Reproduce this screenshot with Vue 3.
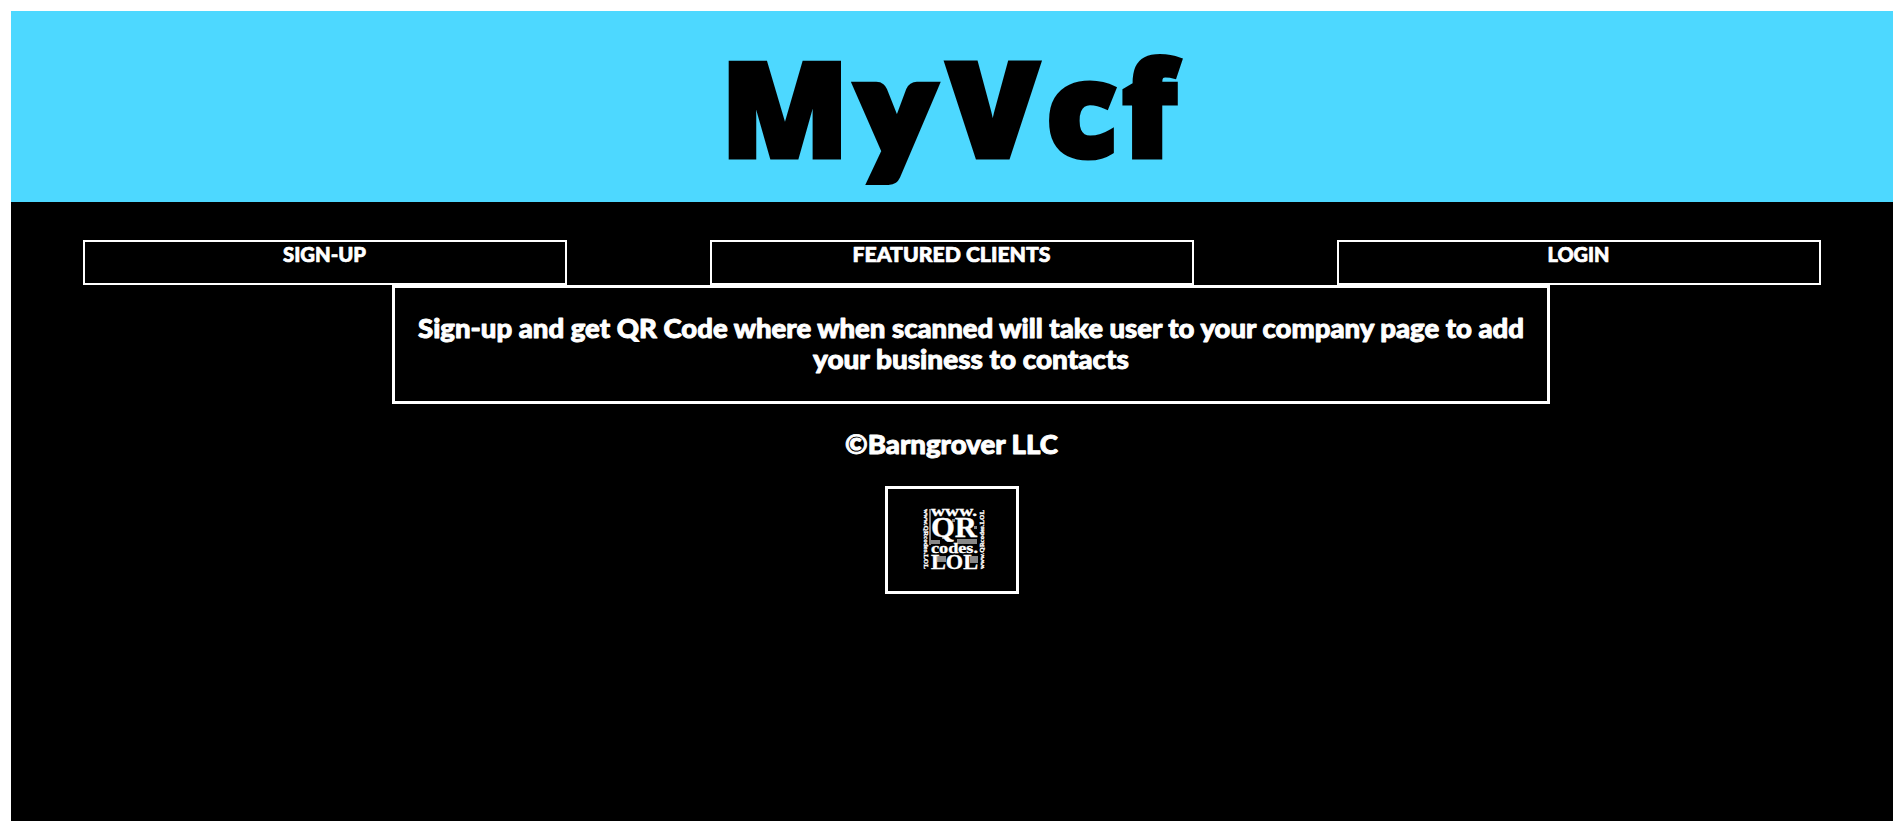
<script setup>
const links = [
  { label: 'SIGN-UP', length: 83 },
  { label: 'FEATURED CLIENTS', length: 198 },
  { label: 'LOGIN', length: 62 },
]
</script>

<template>
  <div class="page">
    <header class="banner">
      <svg class="title" viewBox="0 0 454 148" role="img">
        <text x="-7 132 219 318 394" y="112">M<tspan class="tail">y</tspan>Vcf</text>
      </svg>
    </header>
    <nav class="links">
      <a v-for="l in links" :key="l.label" class="link">
        <svg class="link-text" width="220" height="36">
          <text :x="109.5 - l.length / 2" y="20" :textLength="l.length" lengthAdjust="spacingAndGlyphs">{{ l.label }}</text>
        </svg>
      </a>
    </nav>
    <section class="info">
      <svg class="copy" width="1110" height="70">
        <text x="2" y="26" textLength="1106" lengthAdjust="spacingAndGlyphs">Sign-up and get QR Code where when scanned will take user to your company page to add</text>
        <text x="397" y="57" textLength="316" lengthAdjust="spacingAndGlyphs">your business to contacts</text>
      </svg>
    </section>
    <svg class="copy owner" width="214" height="36">
      <text x="0" y="25" textLength="213" lengthAdjust="spacingAndGlyphs">©Barngrover LLC</text>
    </svg>
    <div class="badge">
      <svg class="logo" viewBox="0 0 62 62">
        <g fill="#888">
          <rect x="6" y="1" width="2" height="36" /><rect x="8" y="32" width="9" height="4" />
          <rect x="34" y="31" width="20" height="5" /><rect x="14" y="48" width="9" height="6" />
          <rect x="47" y="48" width="8" height="7" /><rect x="29" y="11" width="3" height="3" />
          <rect x="51" y="18" width="3" height="3" /><rect x="19" y="29" width="2" height="2" />
        </g>
        <g class="serif">
          <text x="8" y="8" font-size="15" textLength="46" lengthAdjust="spacingAndGlyphs">www.</text>
          <text x="8" y="29" font-size="30" textLength="46" lengthAdjust="spacingAndGlyphs">QR</text>
          <text x="8" y="45" font-size="15" textLength="47" lengthAdjust="spacingAndGlyphs">codes.</text>
          <text x="8" y="61" font-size="22" textLength="47" lengthAdjust="spacingAndGlyphs">LOL</text>
          <text transform="translate(0.5 1) rotate(90)" font-size="7" textLength="60" lengthAdjust="spacingAndGlyphs">www.QRcodes.LOL</text>
          <text transform="translate(61 61) rotate(-90)" font-size="7" textLength="59" lengthAdjust="spacingAndGlyphs">www.QRcodes.LOL</text>
        </g>
      </svg>
    </div>
  </div>
</template>

<style>
body { background: #fff; }
</style>

<style scoped>
.page {
  box-sizing: border-box;
  width: 1882px;
  height: 810px;
  margin: 11px 0 0 11px;
  background: #000;
  display: flex;
  flex-direction: column;
  align-items: center;
}
.banner {
  width: 100%;
  height: 191px;
  background: #4dd8ff;
  display: flex;
  justify-content: center;
}
.title {
  width: 454px;
  height: 148px;
  margin-top: 34px;
  margin-left: 6px;
  overflow: visible;
  font: 800 132px "Open Sans", sans-serif;
  stroke: #000;
  stroke-width: 5px;
  stroke-linejoin: miter;
}
.tail {
  font: 900 134px Lato, sans-serif;
  stroke-width: 12px;
}
.links {
  width: 100%;
  margin-top: 38px;
  display: grid;
  grid-template-columns: repeat(3, 1fr);
  justify-items: center;
}
.link {
  box-sizing: border-box;
  width: 484px;
  height: 45px;
  border: 2px solid #fff;
  display: flex;
  justify-content: center;
}
.link-text {
  font: 900 20.5px Lato, sans-serif;
  fill: #fff;
  stroke: #fff;
  stroke-width: 0.7px;
  stroke-linejoin: round;
  overflow: visible;
}
.info {
  box-sizing: border-box;
  width: 1158px;
  height: 119px;
  border: 3px solid #fff;
  margin-left: 38px;
  padding-top: 24px;
  display: flex;
  justify-content: center;
}
.copy {
  font: 900 26px Lato, sans-serif;
  fill: #fff;
  stroke: #fff;
  stroke-width: 0.9px;
  stroke-linejoin: round;
  overflow: visible;
}
.owner {
  margin-top: 25px;
}
.badge {
  box-sizing: border-box;
  width: 134px;
  height: 108px;
  margin-top: 21px;
  border: 3px solid #fff;
  display: flex;
  justify-content: center;
  align-items: center;
}
.logo {
  width: 62px;
  height: 62px;
  margin-top: -2px;
  margin-left: 3px;
  overflow: visible;
}
.serif {
  font-family: "Liberation Serif", serif;
  font-weight: 700;
  fill: #fff;
  stroke: #fff;
  stroke-width: 0.35px;
}
</style>
